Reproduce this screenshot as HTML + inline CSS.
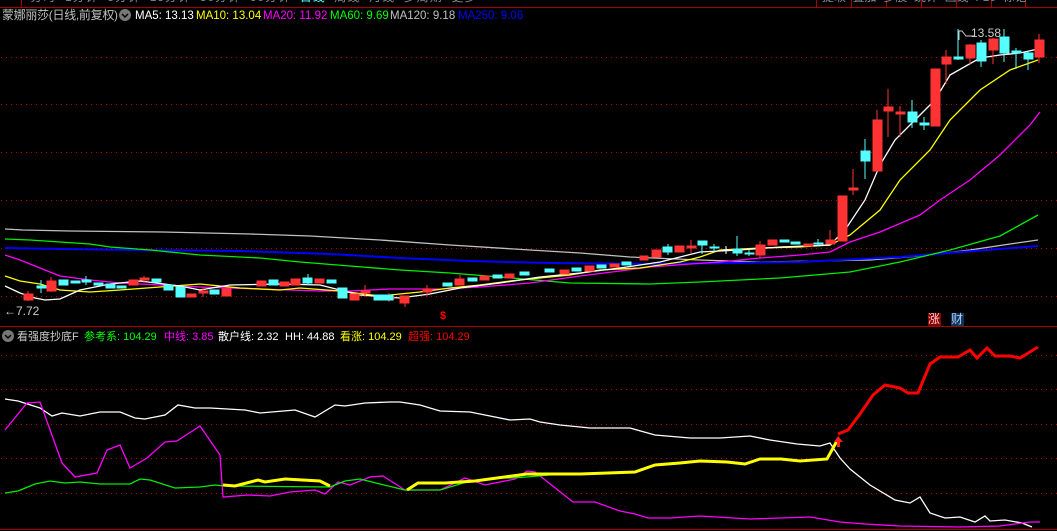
<!DOCTYPE html>
<html><head><meta charset="utf-8"><style>
html,body{margin:0;padding:0;background:#000;width:1057px;height:531px;overflow:hidden;font-family:"Liberation Sans","Noto Sans CJK SC",sans-serif}
.t{position:absolute;font-size:12px;white-space:nowrap;line-height:14px}
.b{font-size:11px;top:330px}
</style></head><body>
<svg width="1057" height="531" style="position:absolute;left:0;top:0" xmlns="http://www.w3.org/2000/svg">
<g stroke="#a00" stroke-width="1">
<line x1="0" y1="7.5" x2="1057" y2="7.5"/>
<line x1="21.5" y1="0" x2="21.5" y2="7"/>
<line x1="816.5" y1="0" x2="816.5" y2="7"/><line x1="851.5" y1="0" x2="851.5" y2="7"/><line x1="886.5" y1="0" x2="886.5" y2="7"/><line x1="921.5" y1="0" x2="921.5" y2="7"/><line x1="956.5" y1="0" x2="956.5" y2="7"/><line x1="991.5" y1="0" x2="991.5" y2="7"/><line x1="1025.5" y1="0" x2="1025.5" y2="7"/>
<line x1="0" y1="326.5" x2="1057" y2="326.5"/>
<line x1="0" y1="529.5" x2="1057" y2="529.5"/>
</g>
<g stroke="#b00" stroke-width="1" stroke-dasharray="1,4">
<line x1="1" y1="57.5" x2="1057" y2="57.5"/><line x1="1" y1="104.5" x2="1057" y2="104.5"/><line x1="1" y1="152.5" x2="1057" y2="152.5"/><line x1="1" y1="200.5" x2="1057" y2="200.5"/><line x1="1" y1="248.5" x2="1057" y2="248.5"/><line x1="1" y1="296.5" x2="1057" y2="296.5"/>
<line x1="1" y1="355.5" x2="1057" y2="355.5"/><line x1="1" y1="389.5" x2="1057" y2="389.5"/><line x1="1" y1="424.5" x2="1057" y2="424.5"/><line x1="1" y1="458.5" x2="1057" y2="458.5"/><line x1="1" y1="493.5" x2="1057" y2="493.5"/>
</g>
<g fill="none" stroke-width="1.3">
<polyline stroke="#c0c0c0" points="5,229 23,230 70,231 163,232 250,234 310,236 380,240 450,245 530,250 580,253 630,257 700,260 760,262 870,260 920,256 970,250 1010,244 1038,240"/>
<polyline stroke="#0000ff" stroke-width="2" points="5,248 60,249 140,250 240,251 330,254 400,258 470,261 550,263 650,264 800,262 900,257 960,252 1038,246"/>
<polyline stroke="#00ee00" points="5,239 30,240 60,242 90,244 110,247 150,250 200,255 260,258 300,262 350,266 400,270 450,273 500,277 570,283 650,284 700,282 780,278 850,272 900,262 950,250 1000,236 1038,215"/>
<polyline stroke="#ff00ff" points="5,255 20,260 40,268 50,272 60,276 90,280 120,283 160,285 200,287 260,289 320,291 350,291 390,289 440,289 480,287 530,283 580,276 620,271 650,267 690,264 720,262 760,258 800,255 830,252 850,242 880,232 920,215 940,200 970,180 1000,155 1030,125 1040,112"/>
<polyline stroke="#ffff00" points="5,276 20,281 40,284 60,290 90,292 120,290 160,287 200,284 240,288 280,290 300,288 340,291 380,296 420,292 450,288 480,285 510,281 540,278 570,275 600,270 640,268 680,262 700,257 720,250 760,248 800,247 830,245 850,235 880,210 900,180 930,150 950,120 980,90 1010,70 1038,60"/>
<polyline stroke="#ffffff" points="5,286 20,293 35,298 45,300 60,299 80,290 110,284 140,281 180,286 200,290 230,285 280,284 320,285 360,295 400,298 430,294 460,288 500,283 540,277 580,273 620,268 660,262 700,252 740,250 780,247 830,245 845,230 865,200 880,165 895,140 915,120 935,100 950,75 980,58 1000,55 1020,53 1038,49"/>
</g>
<g>
<g stroke="#ff3333" fill="#ff3333">
<line x1="28" y1="291" x2="28" y2="301"/><rect x="24" y="294" width="9" height="6"/>
<line x1="51" y1="277" x2="51" y2="292"/><rect x="47" y="281" width="9" height="10"/>
<rect x="129" y="280" width="9" height="5"/><line x1="144" y1="276" x2="144" y2="283"/><rect x="140" y="278" width="9" height="2"/>
<rect x="187" y="294" width="9" height="3"/><rect x="199" y="291" width="9" height="2"/><line x1="203" y1="287" x2="203" y2="297"/>
<rect x="222" y="289" width="9" height="7"/><rect x="257" y="281" width="9" height="5"/><rect x="280" y="282" width="9" height="4"/><rect x="291" y="279" width="9" height="6"/><rect x="315" y="279" width="9" height="4"/>
<rect x="350" y="294" width="9" height="6"/><line x1="365" y1="285" x2="365" y2="297"/><rect x="361" y="291" width="9" height="2"/>
<line x1="389" y1="293" x2="389" y2="302"/><rect x="385" y="297" width="9" height="2"/>
<rect x="400" y="296" width="9" height="7"/><line x1="405" y1="296" x2="405" y2="307"/>
<line x1="427" y1="285" x2="427" y2="296"/><rect x="423" y="289" width="9" height="3"/>
<rect x="455" y="279" width="9" height="6"/><line x1="460" y1="275" x2="460" y2="285"/><rect x="480" y="276" width="9" height="4"/><rect x="505" y="274" width="9" height="4"/>
<rect x="560" y="270" width="9" height="4"/><rect x="585" y="266" width="9" height="5"/><rect x="610" y="264" width="9" height="3"/>
<rect x="640" y="256" width="8" height="4"/><rect x="652" y="250" width="9" height="7"/><rect x="675" y="246" width="9" height="6"/><line x1="691" y1="240" x2="691" y2="253"/><rect x="687" y="246" width="9" height="2"/>
<rect x="756" y="245" width="9" height="10"/><line x1="760" y1="241" x2="760" y2="258"/><rect x="768" y="240" width="9" height="5"/><rect x="804" y="244" width="9" height="2"/><line x1="830" y1="230" x2="830" y2="244"/><rect x="826" y="240" width="9" height="4"/>
<rect x="838" y="196" width="9" height="45"/><line x1="853" y1="169" x2="853" y2="195"/><rect x="849" y="188" width="9" height="2"/>
<line x1="877" y1="110" x2="877" y2="171"/><rect x="873" y="120" width="9" height="51"/>
<line x1="888" y1="89" x2="888" y2="137"/><rect x="884" y="107" width="9" height="4"/>
<line x1="900" y1="106" x2="900" y2="137"/><rect x="896" y="112" width="9" height="2"/>
<rect x="931" y="69" width="9" height="57"/><line x1="946" y1="50" x2="946" y2="84"/><rect x="942" y="57" width="9" height="7"/>
<line x1="970" y1="44" x2="970" y2="64"/><rect x="966" y="45" width="9" height="13"/>
<line x1="993" y1="38" x2="993" y2="64"/><rect x="989" y="39" width="9" height="11"/>
<line x1="1039" y1="34" x2="1039" y2="63"/><rect x="1035" y="40" width="9" height="17"/>
</g>
<g stroke="#55ffff" fill="#55ffff">
<line x1="41" y1="280" x2="41" y2="293"/><rect x="37" y="286" width="9" height="2"/>
<rect x="59" y="280" width="9" height="5"/><rect x="71" y="281" width="9" height="2"/><line x1="86" y1="276" x2="86" y2="285"/><rect x="82" y="280" width="9" height="2"/><rect x="94" y="283" width="9" height="2"/><rect x="106" y="284" width="9" height="4"/><rect x="117" y="286" width="9" height="2"/>
<rect x="152" y="279" width="9" height="3"/><rect x="164" y="285" width="9" height="5"/><rect x="176" y="287" width="9" height="10"/><rect x="210" y="290" width="9" height="4"/>
<rect x="269" y="280" width="9" height="5"/><rect x="303" y="278" width="9" height="5"/><line x1="308" y1="274" x2="308" y2="285"/><rect x="327" y="280" width="9" height="3"/>
<rect x="338" y="288" width="9" height="10"/><rect x="374" y="295" width="9" height="5"/><rect x="384" y="295" width="9" height="5"/>
<rect x="443" y="283" width="9" height="3"/><rect x="468" y="278" width="9" height="3"/><rect x="493" y="275" width="9" height="3"/><rect x="520" y="272" width="9" height="3"/><rect x="545" y="269" width="9" height="3"/><rect x="572" y="268" width="9" height="3"/><rect x="597" y="265" width="9" height="3"/><rect x="622" y="262" width="9" height="3"/>
<rect x="663" y="247" width="9" height="5"/><line x1="668" y1="244" x2="668" y2="255"/>
<rect x="698" y="241" width="9" height="4"/><line x1="702" y1="241" x2="702" y2="254"/>
<line x1="714" y1="244" x2="714" y2="252"/><rect x="710" y="247" width="9" height="1"/>
<rect x="733" y="249" width="9" height="4"/><line x1="737" y1="236" x2="737" y2="256"/>
<line x1="749" y1="250" x2="749" y2="256"/><rect x="745" y="253" width="9" height="1"/>
<rect x="780" y="240" width="9" height="2"/><rect x="791" y="242" width="9" height="2"/><line x1="818" y1="239" x2="818" y2="246"/><rect x="814" y="243" width="9" height="1"/>
<line x1="865" y1="139" x2="865" y2="179"/><rect x="861" y="151" width="9" height="10"/>
<line x1="912" y1="100" x2="912" y2="128"/><rect x="908" y="112" width="9" height="10"/>
<line x1="924" y1="117" x2="924" y2="130"/><rect x="920" y="123" width="9" height="2"/>
<line x1="958" y1="29" x2="958" y2="60"/><rect x="954" y="57" width="9" height="2"/>
<line x1="981" y1="40" x2="981" y2="67"/><rect x="977" y="43" width="9" height="18"/>
<line x1="1004" y1="29" x2="1004" y2="62"/><rect x="1000" y="37" width="9" height="16"/>
<line x1="1016" y1="48" x2="1016" y2="69"/><rect x="1012" y="51" width="9" height="2"/>
<line x1="1028" y1="51" x2="1028" y2="70"/><rect x="1024" y="53" width="9" height="6"/>
</g>
<g stroke="#fff"><line x1="726" y1="246" x2="726" y2="254"/><line x1="722" y1="250" x2="731" y2="250"/></g>
</g>
<polyline fill="none" stroke="#ccc" stroke-width="1" points="959,40 959,31 962,31 966,36 974,36"/>
<g fill="none" stroke-width="1.3">
<polyline stroke="#ffffff" points="5,399 18,401 40,408 52,416 62,413 80,416 100,412 120,412 135,418 145,419 165,415 178,405 195,408 210,408 245,410 260,413 295,410 315,417 335,405 345,406 365,403 390,402 400,402 420,405 440,411 470,412 490,416 510,420 530,419 540,422 560,425 590,428 630,428 655,435 690,438 720,438 750,436 770,440 797,444 820,446 830,443 840,458 850,469 870,485 895,500 910,503 920,497 930,513 945,518 960,517 975,522 985,516 990,521 1005,520 1022,523 1032,527"/>
<polyline stroke="#ff00ff" points="5,430 27,403 40,402 62,463 75,477 97,473 107,450 120,445 130,468 147,458 165,442 177,441 200,426 220,455 223,497 248,495 270,496 290,492 315,490 325,494 338,482 350,485 370,477 383,476 405,490 440,490 455,483 465,478 485,485 515,479 527,471 535,472 573,502 595,502 620,511 635,514 648,518 670,518 700,516 750,519 810,517 840,522 865,524 900,526 960,527 1000,526 1030,522 1040,522"/>
<polyline stroke="#00ee00" points="5,493 18,491 35,484 50,481 65,483 80,482 100,484 130,484 140,479 150,480 175,488 200,487 215,485 225,486 330,487 345,481 360,479 380,484 405,490 440,490 470,481 495,478 510,478 527,477 560,474"/>
<polyline stroke="#ffff00" stroke-width="3" points="223,485 235,486 258,480 265,482 285,479 320,481 330,486"/>
<polyline stroke="#ffff00" stroke-width="3" points="407,490 418,483 445,483 475,481 497,478 527,474 580,474 635,472 655,465 680,463 700,461 727,462 745,464 760,459 781,459 800,461 827,459 838,439"/>
<polyline stroke="#ff0000" stroke-width="3" points="838,434 848,430 860,414 873,395 885,385 900,388 908,393 918,393 930,364 940,357 958,357 970,350 977,358 987,348 995,356 1010,356 1020,358 1038,347"/>
</g>
<path d="M838,436 L834,442 L837,442 L837,447 L840,447 L840,442 L843,442 Z" fill="#ff2222"/>
<circle cx="125" cy="15" r="6" fill="#777"/><path d="M122,14 L125,17 L128,14" stroke="#000" stroke-width="1.5" fill="none"/>
<circle cx="8" cy="336" r="6" fill="#777"/><path d="M5,335 L8,338 L11,335" stroke="#000" stroke-width="1.5" fill="none"/>
<rect x="928" y="313" width="13" height="13" fill="#800"/><rect x="951" y="313" width="13" height="13" fill="#135"/>
</svg>
<div class="t" style="left:0;top:-10px;color:#888;font-size:12px;letter-spacing:1px">&nbsp;&nbsp;&nbsp;&nbsp;&nbsp;&nbsp;&nbsp;分时&nbsp;&nbsp;1分钟&nbsp;&nbsp;5分钟&nbsp;&nbsp;15分钟&nbsp;&nbsp;30分钟&nbsp;&nbsp;60分钟&nbsp;&nbsp;<span style="color:#5ff">日线</span>&nbsp;&nbsp;周线&nbsp;&nbsp;月线&nbsp;&nbsp;多周期&nbsp;&nbsp;更多</div>
<div class="t" style="left:822px;top:-10px;color:#888">提取&nbsp;&nbsp;叠加&nbsp;&nbsp;多股&nbsp;&nbsp;统计&nbsp;&nbsp;画线&nbsp;&nbsp;F10&nbsp;&nbsp;标记</div>
<div class="t" style="left:2px;top:8px;color:#c0c0c0;font-size:12px;letter-spacing:-0.3px">蒙娜丽莎(日线,前复权)</div>
<div class="t" style="left:135px;top:9px;color:#fff;font-size:11.5px">MA5: 13.13</div>
<div class="t" style="left:196px;top:9px;color:#ff0;font-size:11.5px">MA10: 13.04</div>
<div class="t" style="left:263px;top:9px;color:#f0f;font-size:11.5px">MA20: 11.92</div>
<div class="t" style="left:330px;top:9px;color:#0f0;font-size:11.5px">MA60: 9.69</div>
<div class="t" style="left:390px;top:9px;color:#c0c0c0;font-size:11.5px">MA120: 9.18</div>
<div class="t" style="left:458px;top:9px;color:#00f;font-size:11.5px">MA250: 9.06</div>
<div class="t" style="left:971px;top:26px;color:#ccc">13.58</div>
<div class="t" style="left:4px;top:304px;color:#ccc">←7.72</div>
<div class="t" style="left:440px;top:309px;color:#f00;font-weight:bold;font-size:11px">$</div>
<div class="t" style="left:928px;top:312px;color:#fcc;font-size:12px">涨</div>
<div class="t" style="left:951px;top:312px;color:#acf;font-size:12px">财</div>
<div class="t b" style="left:17px;color:#ccc">看强度抄底F</div>
<div class="t b" style="left:84px;color:#0f0">参考系: 104.29</div>
<div class="t b" style="left:164px;color:#f0f">中线: 3.85</div>
<div class="t b" style="left:218px;color:#fff">散户线: 2.32</div>
<div class="t b" style="left:285px;color:#fff">HH: 44.88</div>
<div class="t b" style="left:340px;color:#ff0">看涨: 104.29</div>
<div class="t b" style="left:408px;color:#f00">超强: 104.29</div>
</body></html>
